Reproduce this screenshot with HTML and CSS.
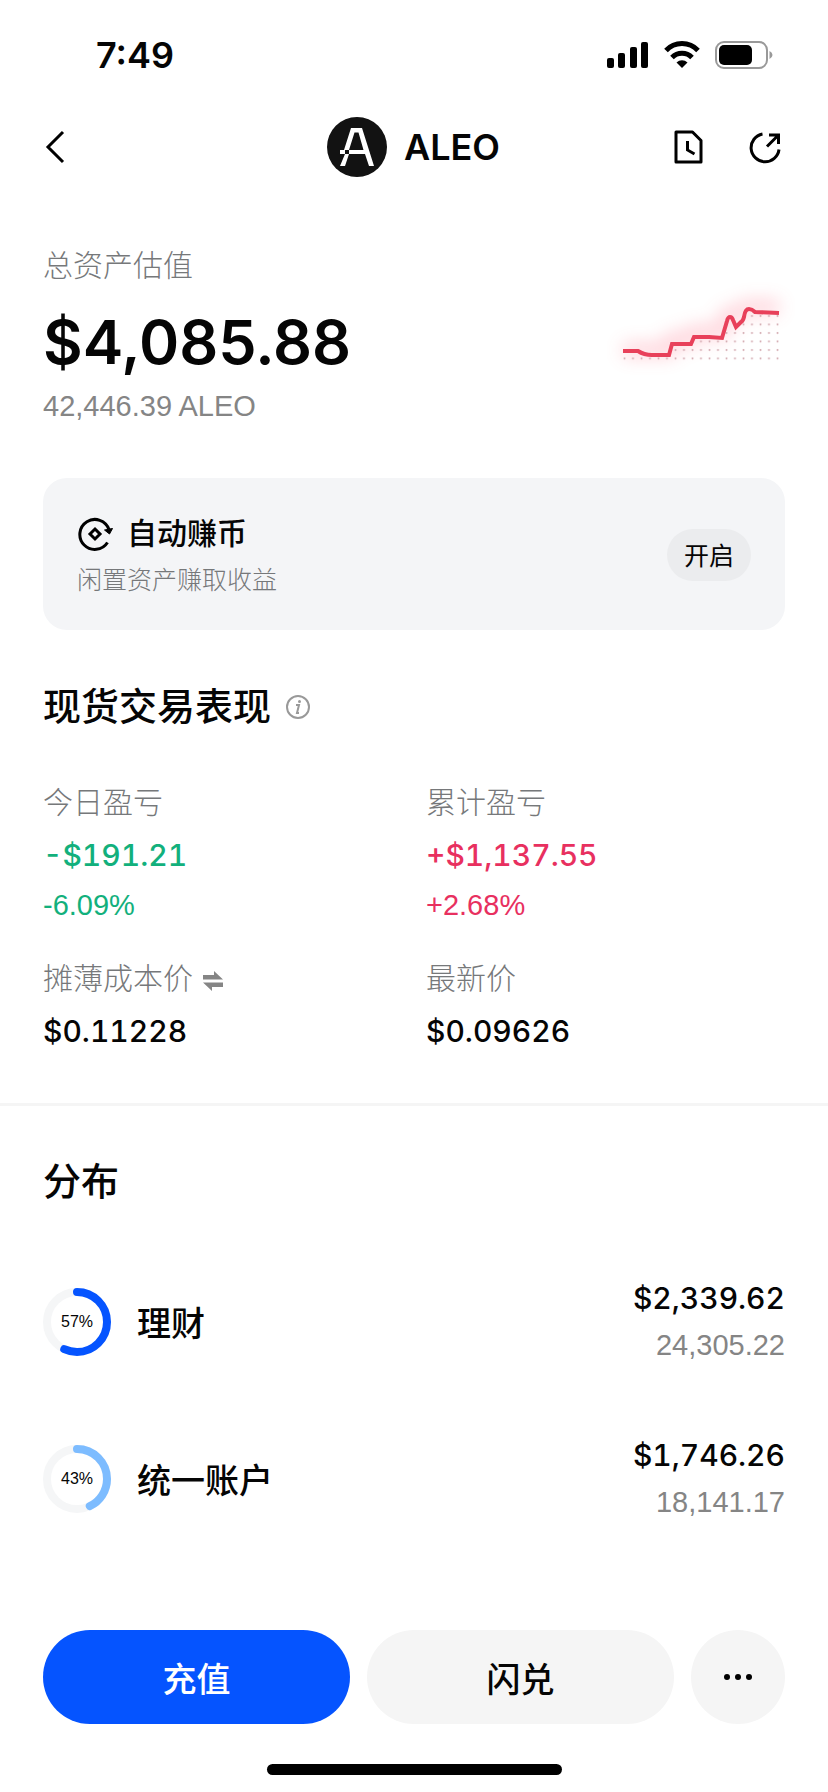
FILE: index.html
```
<!DOCTYPE html>
<html lang="zh-CN">
<head>
  <meta charset="UTF-8">
  <meta name="viewport" content="width=device-width, initial-scale=1.0">
  <title>ALEO</title>
  <link rel="stylesheet" href="styles.css">
</head>
<body>

<div class="page">
  <div class="status-bar">
    <span class="time">7:49</span>
    <div class="status-icons">
      <svg width="42" height="28" viewBox="0 0 42 28">
        <rect x="0" y="17" width="7" height="10" rx="2"/>
        <rect x="11" y="12" width="7" height="15" rx="2"/>
        <rect x="23" y="6" width="7" height="21" rx="2"/>
        <rect x="34" y="1" width="7" height="26" rx="2"/>
      </svg>
      <svg width="36" height="28" viewBox="0 0 36 28">
        <path d="M2 9.500a22 22 0 0 1 32 0" fill="none" stroke="#000" stroke-width="5"/>
        <path d="M8 16.500a14 14 0 0 1 20 0" fill="none" stroke="#000" stroke-width="5"/>
        <path d="M18 27l-5.500-5.500a8 8 0 0 1 11 0z"/>
      </svg>
      <svg width="58" height="28" viewBox="0 0 58 28">
        <rect x="1" y="1" width="51" height="26" rx="8" fill="none" stroke="#999" stroke-width="2"/>
        <rect x="4" y="4" width="33" height="20" rx="5"/>
        <path d="M54.500 10q3 1.500 3 4t-3 4z" fill="#999"/>
      </svg>
    </div>
  </div>

  <header class="nav">
    <a href="#" class="icon-link" aria-label="返回">
      <svg width="20" height="34" viewBox="0 0 20 34" fill="none" stroke="#000" stroke-width="3">
        <path d="M18 2L3 17l15 15"/>
      </svg>
    </a>
    <div class="coin">
      <svg width="60" height="60" viewBox="0 0 60 60">
        <circle cx="30" cy="30" r="30" fill="#121212"/>
        <path d="M24 11h11l12 38h-5l-4-12H22v-4h14.500l-5-17.500h-4L22 33h-5z" fill="#fff"/>
        <path d="M13 33h5v4h-5zM18 37h4l-4 12h-5z" fill="#fff"/>
      </svg>
      <h1>ALEO</h1>
    </div>
    <div class="nav-actions">
      <a href="#" class="icon-link" aria-label="历史记录">
        <svg width="30" height="34" viewBox="0 0 30 34" fill="none" stroke="#000" stroke-width="3">
          <path d="M2 2h16.500L27 10.500V32H2z" stroke-linejoin="round"/>
          <path d="M13.500 11v9l7 4"/>
        </svg>
      </a>
      <a href="#" class="icon-link" aria-label="分享">
        <svg width="34" height="34" viewBox="0 0 34 34" fill="none" stroke="#000" stroke-width="3">
          <path d="M14.500 4A14 14 0 1 0 31 19.500"/>
          <path d="M19 16.500L30 5.500M21 5h9.500v9"/>
        </svg>
      </a>
    </div>
  </header>

  <section class="summary">
    <div>
      <p class="label">总资产估值</p>
      <p class="total">$4,085.88</p>
      <p class="amount">42,446.39 ALEO</p>
    </div>
    <svg class="chart" width="180" height="100" viewBox="15 16 180 100">
      <defs>
        <filter id="glow" x="-20%" y="-60%" width="140%" height="220%">
          <feGaussianBlur stdDeviation="9"/>
        </filter>
        <pattern id="dots" x="33" y="44" width="8.500" height="8.500" patternUnits="userSpaceOnUse">
          <circle cx="1.500" cy="2" r="1" fill="#d3a9b0"/>
        </pattern>
      </defs>
      <path d="M33 80h46l3-11h19l3-7h28l5-17h9l9-8h34" fill="none" stroke="#ff4d6a" stroke-width="14" opacity=".25" filter="url(#glow)"/>
      <path d="M33 85h46l3-11h19l3-7h28l5-17h9l9-6h34v48H33z" fill="url(#dots)"/>
      <path d="M33 81h15q6 4 14 4h17l3-11h19l3-7h15l13 1 5-17q1-4 3-4t3 3l3 7 5-5q2-1 3-5 1-8 5-8 3 0 6 3l24 1" fill="none" stroke="#e8405a" stroke-width="4"/>
    </svg>
  </section>

  <section class="earn-card">
    <div>
      <h2 class="earn-title">
        <svg width="36" height="34" viewBox="0 0 36 34" fill="none" stroke="#000" stroke-width="3">
          <path d="M32 12.500A15 15 0 1 0 30.500 25.500"/>
          <path d="M27.500 13l8-1.500-3 5.500z" fill="#000" stroke-width="1"/>
          <path d="M18 12l5 5-5 5-5-5z"/>
        </svg>
        自动赚币
      </h2>
      <p class="earn-desc">闲置资产赚取收益</p>
    </div>
    <button type="button" class="open-button">开启</button>
  </section>

  <section class="performance">
    <h2 class="section-title">
      现货交易表现
      <svg width="26" height="26" viewBox="0 0 26 26" fill="none" stroke="#999">
        <circle cx="13" cy="13" r="11" stroke-width="2"/>
        <path d="M11 11h3l-2 8h2" stroke-width="2"/>
        <circle cx="14.500" cy="7.500" r="1.500" fill="#999" stroke="none"/>
      </svg>
    </h2>
    <div class="stats">
      <div class="stat">
        <p class="label">今日盈亏</p>
        <p class="value green">-$191.21</p>
        <p class="percent green">-6.09%</p>
      </div>
      <div class="stat">
        <p class="label">累计盈亏</p>
        <p class="value red">+$1,137.55</p>
        <p class="percent red">+2.68%</p>
      </div>
      <div class="stat">
        <p class="label">
          摊薄成本价
          <svg width="20" height="24" viewBox="0 0 20 24" fill="#858585">
            <path d="M0 8h11V4l9 8.500H0zM20 20H9v4l-9-8.500h20z"/>
          </svg>
        </p>
        <p class="value">$0.11228</p>
      </div>
      <div class="stat">
        <p class="label">最新价</p>
        <p class="value">$0.09626</p>
      </div>
    </div>
  </section>

  <section class="distribution">
    <h2 class="section-title">分布</h2>
    <div class="account">
      <div class="ring">
        <svg width="68" height="68" viewBox="0 0 68 68">
          <circle class="ring-track" cx="34" cy="34" r="30"/>
          <circle class="ring-bar" cx="34" cy="34" r="30" pathLength="100" stroke-dasharray="57 100" transform="rotate(-90 34 34)"/>
        </svg>
        <span class="ring-text">57%</span>
      </div>
      <span class="account-name">理财</span>
      <div class="account-amount">
        <p class="value">$2,339.62</p>
        <p class="amount">24,305.22</p>
      </div>
    </div>
    <div class="account">
      <div class="ring">
        <svg width="68" height="68" viewBox="0 0 68 68">
          <circle class="ring-track" cx="34" cy="34" r="30"/>
          <circle class="ring-bar light" cx="34" cy="34" r="30" pathLength="100" stroke-dasharray="43 100" transform="rotate(-90 34 34)"/>
        </svg>
        <span class="ring-text">43%</span>
      </div>
      <span class="account-name">统一账户</span>
      <div class="account-amount">
        <p class="value">$1,746.26</p>
        <p class="amount">18,141.17</p>
      </div>
    </div>
  </section>

  <footer class="bottom">
    <div class="actions">
      <button type="button" class="primary">充值</button>
      <button type="button">闪兑</button>
      <button type="button" class="more" aria-label="更多">
        <svg width="28" height="6" viewBox="0 0 28 6">
          <circle cx="3" cy="3" r="3"/>
          <circle cx="14" cy="3" r="3"/>
          <circle cx="25" cy="3" r="3"/>
        </svg>
      </button>
    </div>
    <div class="home-indicator"></div>
  </footer>
</div>

</body>
</html>
```
FILE: styles.css
```
* {
  box-sizing: border-box;
}

body {
  margin: 0;
  background-color: #fff;
  color: #050505;
  font-family: "Liberation Sans", "Noto Sans CJK SC", sans-serif;
}

h1, h2, p {
  margin: 0;
}

svg {
  display: block;
  flex-shrink: 0;
}

button {
  border: none;
  padding: 0;
  color: #050505;
  font-family: inherit;
  font-weight: 500;
  cursor: pointer;
}

.page {
  display: flex;
  flex-direction: column;
  min-height: 100vh;
}

/* Status bar */
.status-bar {
  display: flex;
  justify-content: space-between;
  align-items: center;
  height: 110px;
  padding: 0 55px 0 96px;
}

.time, .coin h1, .total, .value {
  font-family: Inter, sans-serif;
}

.time {
  font-size: 36px;
  font-weight: 600;
}

.status-icons {
  display: flex;
  gap: 15px;
}

/* Header */
.nav {
  display: grid;
  grid-template-columns: 1fr auto 1fr;
  align-items: center;
  height: 74px;
  padding: 0 46px 0 45px;
}

.icon-link {
  display: block;
}

.coin {
  display: flex;
  align-items: center;
  gap: 17px;
}

.coin h1 {
  font-size: 36px;
  font-weight: 600;
}

.nav-actions {
  display: flex;
  justify-content: flex-end;
  gap: 44px;
}

/* Total assets */
.summary {
  display: flex;
  justify-content: space-between;
  align-items: center;
  padding: 62px 43px 52px;
}

.chart {
  overflow: visible;
}

.label {
  display: flex;
  align-items: center;
  gap: 10px;
  color: #76787a;
  font-size: 30px;
  font-weight: 300;
  line-height: 40px;
}

.total {
  margin: 20px 0 8px;
  font-size: 61px;
  font-weight: 600;
  line-height: 72px;
}

.amount {
  color: #858585;
  font-size: 29px;
  line-height: 40px;
}

/* Auto earn */
.earn-card {
  display: flex;
  justify-content: space-between;
  align-items: center;
  margin: 0 43px;
  padding: 34px 34px 32px;
  border-radius: 24px;
  background-color: #f4f5f7;
}

.earn-title {
  display: flex;
  align-items: center;
  gap: 14px;
  font-size: 30px;
  font-weight: 500;
  line-height: 44px;
}

.earn-desc {
  margin-top: 6px;
  color: #76787a;
  font-size: 25px;
  font-weight: 300;
  line-height: 36px;
}

.open-button {
  width: 84px;
  height: 52px;
  padding-bottom: 3px;
  border-radius: 26px;
  background-color: #ebecee;
  font-size: 25px;
  font-weight: 400;
}

/* Spot performance */
.performance {
  padding: 51px 43px 52px;
  border-bottom: 3px solid #f5f5f5;
}

.section-title {
  display: flex;
  align-items: center;
  gap: 14px;
  font-size: 38px;
  font-weight: 500;
  line-height: 52px;
}

.stats {
  display: grid;
  grid-template-columns: 1fr 1fr;
  gap: 34px 24px;
  margin-top: 50px;
}

.value {
  font-size: 30px;
  font-weight: 500;
  line-height: 40px;
  font-variant-numeric: tabular-nums;
}

.stat .value {
  margin-top: 12px;
}

.percent {
  margin-top: 10px;
  font-size: 29px;
  line-height: 40px;
}

.green {
  color: #12b07c;
}

.red {
  color: #e8305f;
}

/* Distribution */
.distribution {
  padding: 50px 43px;
}

.account {
  display: flex;
  align-items: center;
  gap: 26px;
  margin-top: 70px;
}

.ring {
  display: grid;
  place-items: center;
}

.ring svg, .ring-text {
  grid-area: 1 / 1;
}

.ring circle {
  fill: none;
  stroke-width: 8;
}

.ring-track {
  stroke: #f5f6f7;
}

.ring-bar {
  stroke: #0554ff;
  stroke-linecap: round;
}

.ring-bar.light {
  stroke: #7dbcff;
}

.ring-text {
  font-size: 16px;
}

.account-name {
  font-size: 34px;
  font-weight: 500;
}

.account-amount {
  margin-left: auto;
  text-align: right;
}

.account-amount .amount {
  margin-top: 7px;
}

/* Bottom actions */
.bottom {
  margin-top: auto;
  padding: 0 43px 17px;
}

.actions {
  display: flex;
  gap: 17px;
}

.actions button {
  flex: 1;
  height: 94px;
  border-radius: 47px;
  background-color: #f5f5f5;
  font-size: 34px;
}

.actions .primary {
  background-color: #0554ff;
  color: #fff;
}

.actions .more {
  display: flex;
  flex: 0 0 94px;
  align-items: center;
  justify-content: center;
}

.home-indicator {
  width: 295px;
  height: 11px;
  margin: 40px auto 0;
  border-radius: 6px;
  background-color: #000;
}
```
